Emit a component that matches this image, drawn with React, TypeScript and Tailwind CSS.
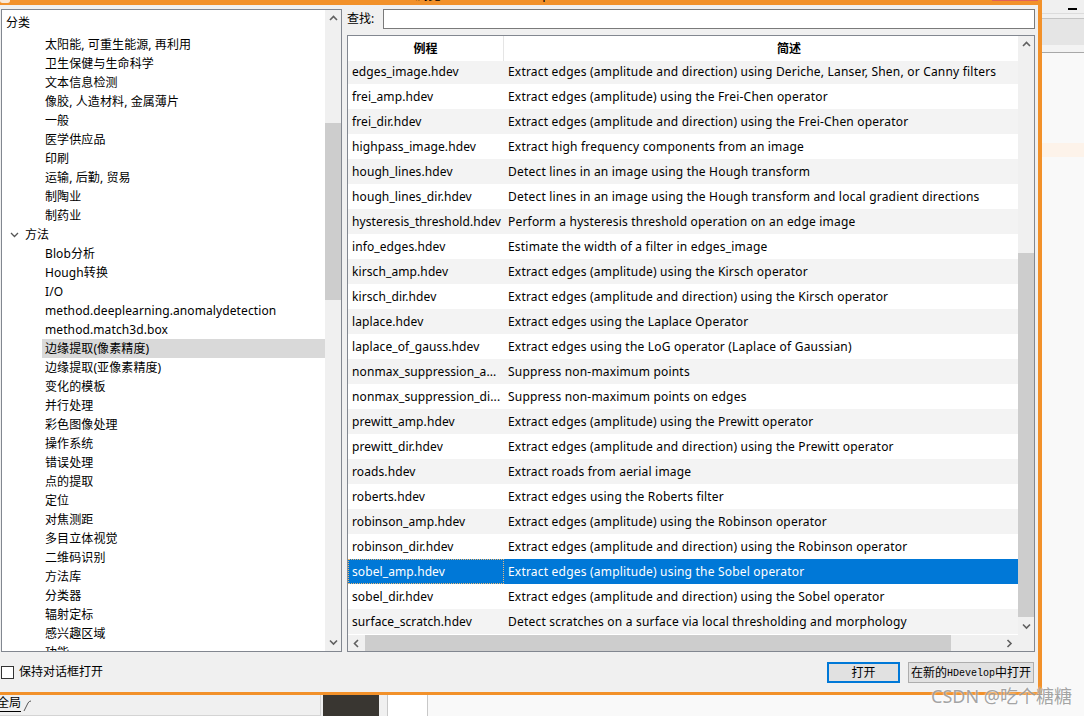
import React from "react";

type TreeRow = { label: string; level: 0 | 1; open?: boolean; selected?: boolean };

const treeRows: TreeRow[] = [
  { label: "太阳能, 可重生能源, 再利用", level: 1 },
  { label: "卫生保健与生命科学", level: 1 },
  { label: "文本信息检测", level: 1 },
  { label: "像胶, 人造材料, 金属薄片", level: 1 },
  { label: "一般", level: 1 },
  { label: "医学供应品", level: 1 },
  { label: "印刷", level: 1 },
  { label: "运输, 后勤, 贸易", level: 1 },
  { label: "制陶业", level: 1 },
  { label: "制药业", level: 1 },
  { label: "方法", level: 0, open: true },
  { label: "Blob分析", level: 1 },
  { label: "Hough转换", level: 1 },
  { label: "I/O", level: 1 },
  { label: "method.deeplearning.anomalydetection", level: 1 },
  { label: "method.match3d.box", level: 1 },
  { label: "边缘提取(像素精度)", level: 1, selected: true },
  { label: "边缘提取(亚像素精度)", level: 1 },
  { label: "变化的模板", level: 1 },
  { label: "并行处理", level: 1 },
  { label: "彩色图像处理", level: 1 },
  { label: "操作系统", level: 1 },
  { label: "错误处理", level: 1 },
  { label: "点的提取", level: 1 },
  { label: "定位", level: 1 },
  { label: "对焦测距", level: 1 },
  { label: "多目立体视觉", level: 1 },
  { label: "二维码识别", level: 1 },
  { label: "方法库", level: 1 },
  { label: "分类器", level: 1 },
  { label: "辐射定标", level: 1 },
  { label: "感兴趣区域", level: 1 },
  { label: "功能", level: 1 },
];

const examples: [string, string][] = [
  ["edges_image.hdev", "Extract edges (amplitude and direction) using Deriche, Lanser, Shen, or Canny filters"],
  ["frei_amp.hdev", "Extract edges (amplitude) using the Frei-Chen operator"],
  ["frei_dir.hdev", "Extract edges (amplitude and direction) using the Frei-Chen operator"],
  ["highpass_image.hdev", "Extract high frequency components from an image"],
  ["hough_lines.hdev", "Detect lines in an image using the Hough transform"],
  ["hough_lines_dir.hdev", "Detect lines in an image using the Hough transform and local gradient directions"],
  ["hysteresis_threshold.hdev", "Perform a hysteresis threshold operation on an edge image"],
  ["info_edges.hdev", "Estimate the width of a filter in edges_image"],
  ["kirsch_amp.hdev", "Extract edges (amplitude) using the Kirsch operator"],
  ["kirsch_dir.hdev", "Extract edges (amplitude and direction) using the Kirsch operator"],
  ["laplace.hdev", "Extract edges using the Laplace Operator"],
  ["laplace_of_gauss.hdev", "Extract edges using the LoG operator (Laplace of Gaussian)"],
  ["nonmax_suppression_a...", "Suppress non-maximum points"],
  ["nonmax_suppression_di...", "Suppress non-maximum points on edges"],
  ["prewitt_amp.hdev", "Extract edges (amplitude) using the Prewitt operator"],
  ["prewitt_dir.hdev", "Extract edges (amplitude and direction) using the Prewitt operator"],
  ["roads.hdev", "Extract roads from aerial image"],
  ["roberts.hdev", "Extract edges using the Roberts filter"],
  ["robinson_amp.hdev", "Extract edges (amplitude) using the Robinson operator"],
  ["robinson_dir.hdev", "Extract edges (amplitude and direction) using the Robinson operator"],
  ["sobel_amp.hdev", "Extract edges (amplitude) using the Sobel operator"],
  ["sobel_dir.hdev", "Extract edges (amplitude and direction) using the Sobel operator"],
  ["surface_scratch.hdev", "Detect scratches on a surface via local thresholding and morphology"],
];

const SELECTED = 20;

// small windows-10 style scrollbar arrow
function Arrow({ dir }: { dir: "up" | "down" | "left" | "right" }) {
  const pts = {
    up: "1,5 4.5,1.5 8,5",
    down: "1,1.5 4.5,5 8,1.5",
    left: "5,1 1.5,4.5 5,8",
    right: "1.5,1 5,4.5 1.5,8",
  }[dir];
  const vertical = dir === "up" || dir === "down";
  return (
    <svg width={vertical ? 9 : 7} height={vertical ? 7 : 9} viewBox={vertical ? "0 0 9 7" : "0 0 7 9"}>
      <polyline points={pts} fill="none" stroke="#606060" strokeWidth="1.6" />
    </svg>
  );
}

function TreePanel() {
  return (
    <div className="w-[341px] h-[643px] border border-[#828790] bg-white flex">
      <div className="flex-1 overflow-hidden pt-[3px] text-[12px] tracking-[0.1px] text-black">
        <div className="h-[19px] flex items-center pl-[4px] mb-[3px]">分类</div>
        {treeRows.map((row) =>
          row.level === 0 ? (
            <div key={row.label} className="h-[19px] flex items-center">
              <div className="w-[23px] flex justify-end pr-[6px]">
                <svg width="9" height="6" viewBox="0 0 9 6">
                  <polyline points="1,1 4.5,4.5 8,1" fill="none" stroke="#555" strokeWidth="1.3" />
                </svg>
              </div>
              <span>{row.label}</span>
            </div>
          ) : (
            <div key={row.label} className="h-[19px] flex items-center pl-[40px]">
              <div
                className={`h-full flex-1 flex items-center pl-[3px] whitespace-nowrap ${row.selected ? "bg-[#d9d9d9]" : ""}`}
              >
                {row.label}
              </div>
            </div>
          )
        )}
      </div>
      <div className="w-[16px] bg-[#f0f0f0] flex flex-col">
        <div className="h-[17px] flex items-center justify-center">
          <Arrow dir="up" />
        </div>
        <div className="h-[96px]" />
        <div className="h-[177px] bg-[#cdcdcd]" />
        <div className="flex-1" />
        <div className="h-[17px] flex items-center justify-center">
          <Arrow dir="down" />
        </div>
      </div>
    </div>
  );
}

function ExampleTable() {
  return (
    <div className="h-[617px] border border-[#828790] bg-white flex flex-col text-[12px]">
      <div className="h-[599px] flex">
        <div className="flex-1 overflow-hidden flex flex-col">
          <div className="h-[25px] flex shrink-0 font-bold">
            <div className="w-[156px] shrink-0 border-r border-[#e5e5e5] flex items-center justify-center">例程</div>
            <div className="w-[570px] shrink-0 flex items-center justify-center">简述</div>
          </div>
          {examples.map(([file, desc], i) => {
            const selected = i === SELECTED;
            const bg = selected ? "bg-[#0078d7] text-white" : i % 2 === 0 ? "bg-[#f3f3f3]" : "bg-white";
            return (
              <div
                key={file}
                className={`${i === 0 ? "h-[23px] pb-[2px]" : "h-[25px]"} flex shrink-0 whitespace-nowrap tracking-[0.2px] ${bg}`}
              >
                <div
                  className={`w-[156px] shrink-0 flex items-center overflow-hidden tracking-[0.1px] ${selected ? "pl-[3px] border border-dotted border-[#e8b878]" : "pl-[4px]"}`}
                >
                  {file}
                </div>
                <div className="flex items-center pl-[4px]">{desc}</div>
              </div>
            );
          })}
        </div>
        <div className="w-[16px] bg-[#f0f0f0] flex flex-col">
          <div className="h-[17px] flex items-center justify-center">
            <Arrow dir="up" />
          </div>
          <div className="h-[200px]" />
          <div className="h-[364px] bg-[#cdcdcd]" />
          <div className="flex-1" />
          <div className="h-[17px] flex items-center justify-center">
            <Arrow dir="down" />
          </div>
        </div>
      </div>
      <div className="h-[16px] flex bg-[#f0f0f0]">
        <div className="flex-1 flex">
          <div className="w-[17px] flex items-center justify-center">
            <Arrow dir="left" />
          </div>
          <div className="w-[586px] bg-[#cdcdcd]" />
          <div className="flex-1" />
          <div className="w-[17px] flex items-center justify-center">
            <Arrow dir="right" />
          </div>
        </div>
        <div className="w-[16px]" />
      </div>
    </div>
  );
}

function Dialog() {
  return (
    <div className="w-[1042px] h-[695px] flex flex-col border-r-4 border-b-[3px] border-[#f2912a] bg-[#f0f0f0]">
      <div className="h-[5px] bg-[#f2912a] relative overflow-hidden shrink-0">
        <div className="absolute left-0 -top-[2px] w-[10px] h-[5px] rounded-full bg-[#f8e8d8]" />
        <div className="absolute left-[415px] -top-[15px] text-[13px] leading-[18px] text-black whitespace-nowrap">
          浏览<span className="ml-[50px]">HDevelop</span>
        </div>
        <div className="absolute right-0 top-0 w-[46px] h-[1px] bg-[#e06058]" />
      </div>
      <div className="flex pl-[1px] pr-[3px] pt-[4px]">
        <TreePanel />
        <div className="ml-[5px] w-[688px] flex flex-col gap-[6px]">
          <div className="h-[20px] flex items-center">
            <div className="w-[36px] text-[12px]">查找:</div>
            <div className="flex-1 h-[20px] border border-[#7a7a7a] bg-white" />
          </div>
          <ExampleTable />
        </div>
      </div>
      <div className="h-[40px] flex items-center pl-[1px] pr-[4px] text-[12px]">
        <div className="w-[13px] h-[13px] border border-[#333] bg-white" />
        <span className="ml-[5px]">保持对话框打开</span>
        <div className="flex-1" />
        <button className="w-[73px] h-[21px] border-2 border-[#0078d7] bg-[#e1e1e1] text-[12px] flex items-center justify-center pt-[2px]">
          打开
        </button>
        <button className="ml-[8px] w-[126px] h-[21px] border border-[#adadad] bg-[#e1e1e1] text-[12px] flex items-center justify-center whitespace-nowrap pt-[2px]">
          在新的<span className="font-['Liberation_Mono',monospace] text-[10px]">HDevelop</span>中打开
        </button>
      </div>
    </div>
  );
}

function SideStrip() {
  return (
    <div className="flex-1 h-[695px] bg-[#f9f9f9] flex flex-col">
      <div className="h-[13px] bg-[#f0f0f0] pl-[26px] pt-[8px]">
        <div className="w-[9px] h-[2px] bg-black" />
      </div>
      <div className="h-[1px] bg-[#dcdcdc]" />
      <div className="h-[4px] bg-[#f0f0f0]" />
      <div className="h-[27px] bg-[#e5e5e5] border-t border-[#c4c4c4]" />
      <div className="h-[7px] bg-[#f3f3f3]" />
      <div className="h-[1px] bg-[#a8a8a8]" />
      <div className="h-[90px]" />
      <div className="h-[14px] bg-[#fdf3ea]" />
    </div>
  );
}

function BottomStrip() {
  return (
    <div className="h-[21px] flex bg-[#f9f9f9] text-[12px]">
      <div className="w-[321px] bg-[#f0f0f0] border-r border-b border-[#d4d4d4] flex items-start">
        <span className="-ml-[3px] border-b border-black leading-[16px]">全局</span>
        <svg width="10" height="16" viewBox="0 0 10 16" className="ml-[1px]">
          <path d="M2 16 L6 8 Q7 6 9 6" fill="none" stroke="#555" strokeWidth="1" />
        </svg>
      </div>
      <div className="w-[2px] bg-[#f0f0f0]" />
      <div className="w-[56px] bg-[#393631]" />
      <div className="w-[8px] bg-[#f0f0f0]" />
      <div className="w-[1px] bg-[#c8c8c8]" />
      <div className="w-[39px] bg-white" />
      <div className="w-[1px] bg-[#c8c8c8]" />
      <div className="flex-1" />
    </div>
  );
}

export default function App() {
  return (
    <div className="w-[1084px] h-[716px] relative overflow-hidden bg-[#f9f9f9] text-black font-['Noto_Sans','Noto_Sans_CJK_SC',sans-serif]">
      <div className="flex">
        <Dialog />
        <SideStrip />
      </div>
      <BottomStrip />
      <div className="absolute left-[931px] top-[683px] text-[18px] text-[#8c8c8c]/80 whitespace-nowrap [text-shadow:0_0_2px_#ffffff]">
        CSDN @吃个糖糖
      </div>
    </div>
  );
}
